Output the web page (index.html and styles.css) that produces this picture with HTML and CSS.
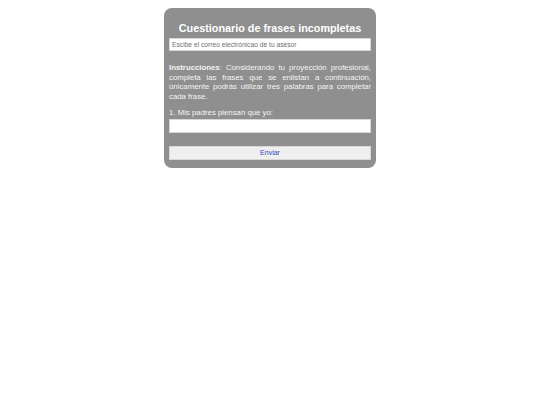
FILE: index.html
```html
<!DOCTYPE html>
<html lang="es">
<head>
<meta charset="utf-8">
<title>Cuestionario</title>
<link rel="stylesheet" href="styles.css">
</head>
<body>
<form class="card">
  <h1 class="title">Cuestionario de frases incompletas</h1>
  <input class="field email" type="text" placeholder="Escibe el correo electrónicao de tu asesor">
  <p class="instructions"><strong>Instrucciones</strong>: Considerando tu proyección profesional, completa las frases que se enlistan a continuación, únicamente podrás utilizar tres palabras para completar cada frase.</p>
  <label class="label" for="q1">1. Mis padres piensan que yo:</label>
  <input class="field answer" id="q1" type="text">
  <button class="send" type="button">Enviar</button>
</form>
</body>
</html>
```
FILE: styles.css
```css
html, body {
  margin: 0;
  padding: 0;
  background: #ffffff;
}
body {
  font-family: "Liberation Sans", Arial, sans-serif;
}
.card {
  box-sizing: border-box;
  width: 212px;
  margin: 8px auto 0;
  padding: 13px 5px 8px;
  background: #8f8f8f;
  border-radius: 8px;
  display: flex;
  flex-direction: column;
}
.title {
  margin: 0 0 3px;
  font-size: 10.8px;
  line-height: 14px;
  font-weight: bold;
  color: #ffffff;
  text-align: center;
}
.field {
  box-sizing: border-box;
  display: block;
  width: 202px;
  margin: 0;
  background: #ffffff;
  border: 1px solid #d6d6d6;
  border-radius: 0;
  font-family: "Liberation Sans", Arial, sans-serif;
  outline: none;
}
.email {
  height: 13px;
  padding: 0 2px;
  font-size: 6.7px;
}
.email::placeholder {
  color: #6f6f6f;
}
.instructions {
  margin: 12px 0 0;
  font-size: 7.8px;
  line-height: 9.7px;
  color: #f4f4f4;
  text-align: justify;
}
.label {
  display: block;
  margin-top: 6px;
  font-size: 7.8px;
  line-height: 10px;
  color: #f4f4f4;
}
.answer {
  height: 14px;
  margin-top: 1px;
}
.send {
  box-sizing: border-box;
  display: block;
  width: 202px;
  height: 14px;
  margin-top: 13px;
  padding: 0;
  background: #efefef;
  border: 1px solid #d8d8d8;
  border-radius: 0;
  font-family: "Liberation Sans", Arial, sans-serif;
  font-size: 7px;
  color: #3344bb;
  cursor: pointer;
}
```
